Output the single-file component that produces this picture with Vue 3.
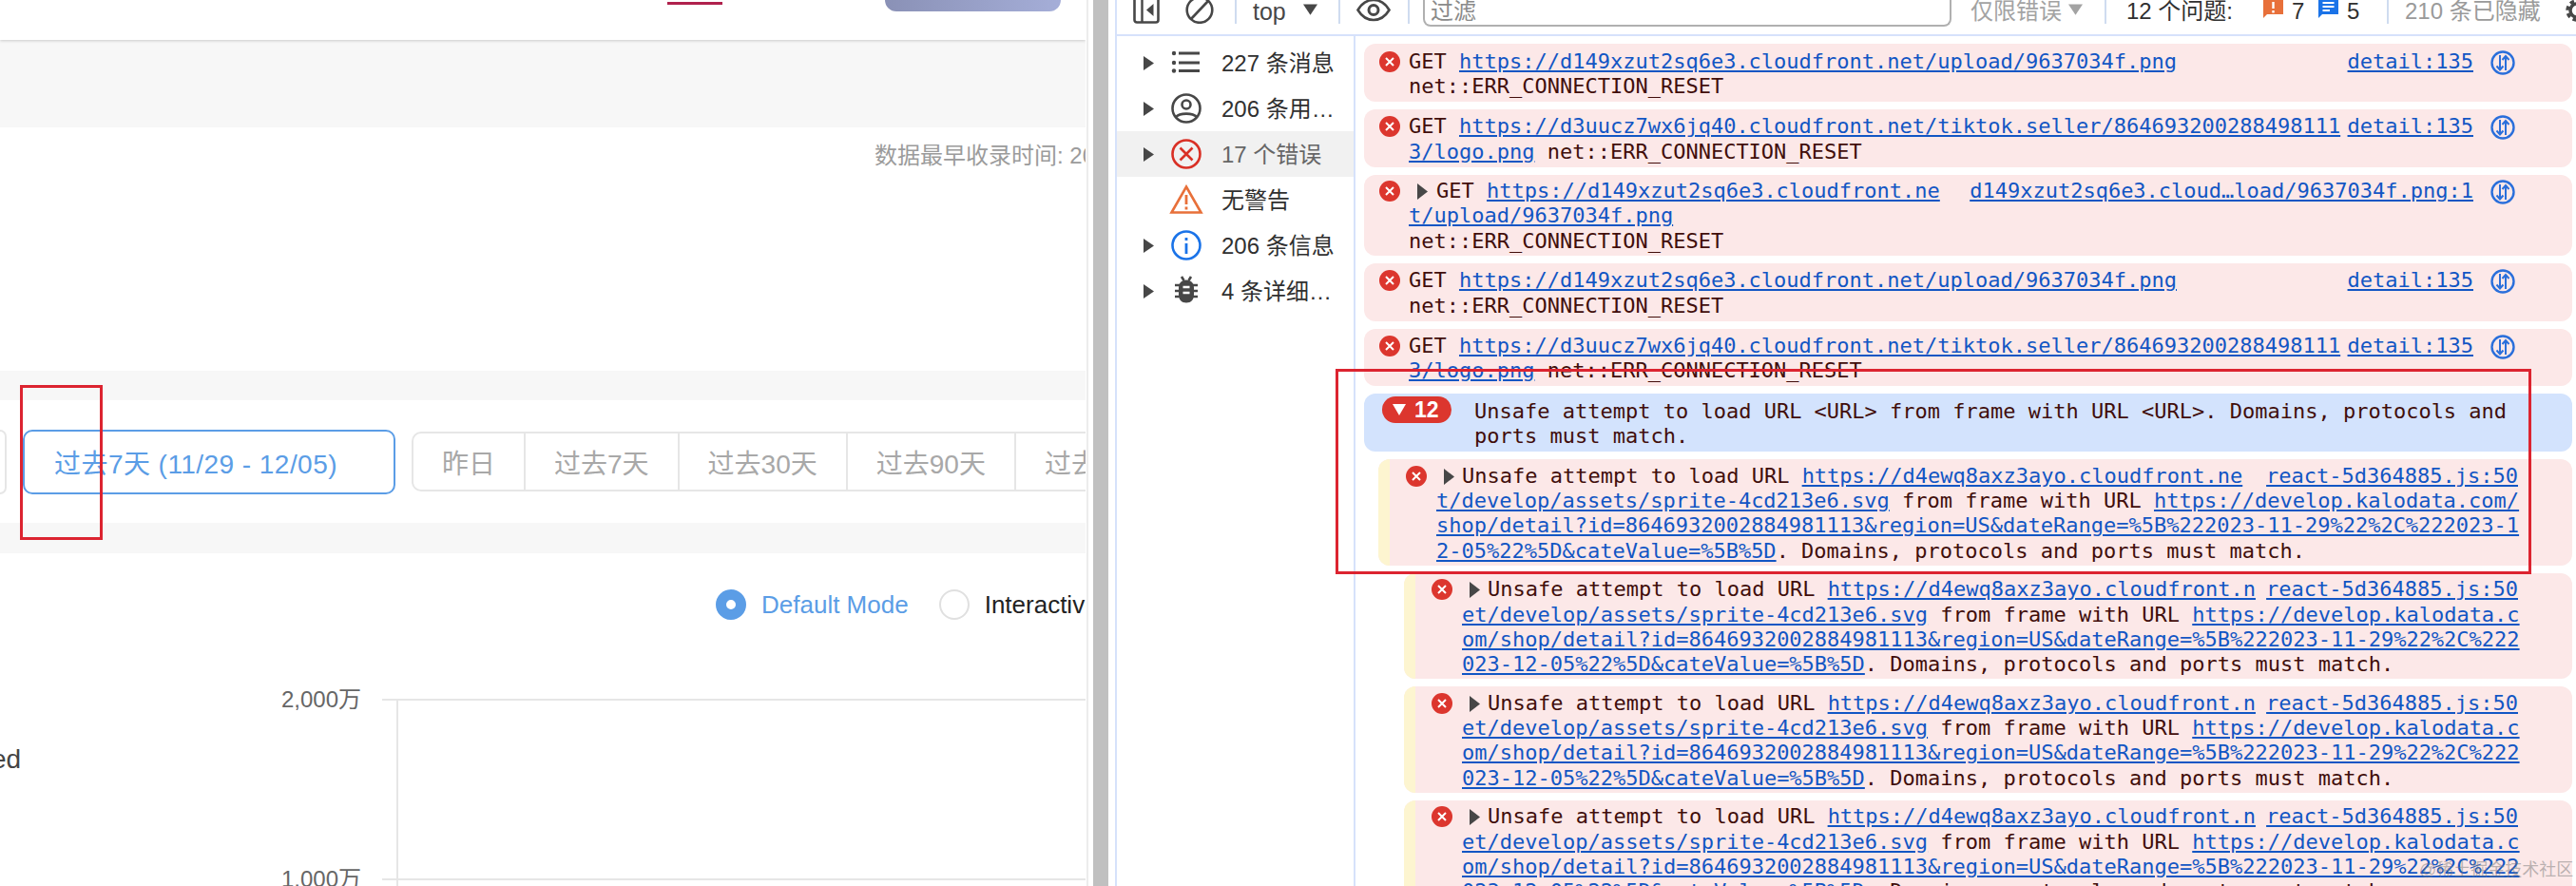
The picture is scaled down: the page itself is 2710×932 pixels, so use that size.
<script setup>
const sideRows = [
  { key: 'all', text: '227 条消息', arrow: true },
  { key: 'user', text: '206 条用户消息', arrow: true },
  { key: 'err', text: '17 个错误', arrow: true, active: true },
  { key: 'warn', text: '无警告', arrow: false },
  { key: 'info', text: '206 条信息', arrow: true },
  { key: 'bug', text: '4 条详细信息', arrow: true },
]
const tabs = ['昨日', '过去7天', '过去30天', '过去90天', '过去180天']
const nestedFirst = {
  level: 'one',
  head: 'https://d4ewq8axz3ayo.cloudfront.ne',
  l2a: 't/develop/assets/sprite-4cd213e6.svg',
  l2b: 'https://develop.kalodata.com/',
  l3: 'shop/detail?id=8646932002884981113&region=US&dateRange=%5B%222023-11-29%22%2C%222023-1',
  l4: '2-05%22%5D&cateValue=%5B%5D',
}
const nestedOther = {
  level: 'two',
  head: 'https://d4ewq8axz3ayo.cloudfront.n',
  l2a: 'et/develop/assets/sprite-4cd213e6.svg',
  l2b: 'https://develop.kalodata.c',
  l3: 'om/shop/detail?id=8646932002884981113&region=US&dateRange=%5B%222023-11-29%22%2C%222',
  l4: '023-12-05%22%5D&cateValue=%5B%5D',
}
const nested = [nestedFirst, nestedOther, nestedOther, nestedOther]
</script>

<template>
  <div class="root">
    <section class="page">
      <header class="head">
        <span class="tab-mark"></span>
        <span class="cta"></span>
      </header>
      <div class="band band-tall"></div>
      <div class="note-section">
        <span class="note">数据最早收录时间: 2023</span>
      </div>
      <div class="band band-short"></div>
      <div class="filters">
        <span class="ghost"></span>
        <span class="picked">过去7天 (11/29 - 12/05)</span>
        <div class="tabs">
          <span v-for="t in tabs" :key="t" class="tabitem">{{ t }}</span>
        </div>
      </div>
      <div class="band band-short2"></div>
      <div class="chart">
        <div class="modes">
          <span class="radio on"></span>
          <span class="mode on-text">Default Mode</span>
          <span class="radio off"></span>
          <span class="mode off-text">Interactive Mode</span>
        </div>
        <div class="tick first"><span class="tick-label">2,000万</span><span class="tick-line"></span></div>
        <div class="legend-row"><span class="legend">ed</span></div>
        <div class="tick"><span class="tick-label">1,000万</span><span class="tick-line"></span></div>
        <span class="y-axis"></span>
      </div>
    </section>

    <div class="sash"><span class="sash-line"></span><span class="sash-bar"></span></div>

    <section class="tools">
      <div class="toolbar">
        <svg class="i-panel" viewBox="0 0 28 25"><rect x="1.5" y="-5" width="25" height="28.5" rx="2.5" fill="none" stroke="#474747" stroke-width="2.6"/><path d="M9.5 0V23" stroke="#474747" stroke-width="2.4"/><path d="M21.5 4V17L14 10.5Z" fill="#474747"/></svg>
        <svg class="i-clear" viewBox="0 0 30 25"><circle cx="15" cy="10.5" r="13.3" fill="none" stroke="#474747" stroke-width="2.6"/><path d="M6 20L24 1" stroke="#474747" stroke-width="2.6"/></svg>
        <span class="sep s1"></span>
        <span class="t-top">top</span>
        <svg class="i-tri t1" viewBox="0 0 16 12"><path d="M0 0H16L8 12Z" fill="#474747"/></svg>
        <span class="sep s2"></span>
        <svg class="i-eye" viewBox="0 0 36 24"><path d="M1.5 10.5C6 3 12 0 18 0S30 3 34.500 10.500C30 18 24 21 18 21S6 18 1.500 10.500Z" fill="none" stroke="#474747" stroke-width="2.600"/><circle cx="18" cy="10.500" r="5" fill="none" stroke="#474747" stroke-width="3"/></svg>
        <span class="sep s3"></span>
        <div class="filter"><span>过滤</span></div>
        <span class="t-level">仅限错误</span>
        <svg class="i-tri t2" viewBox="0 0 16 12"><path d="M0 0H16L8 12Z" fill="#a3a3a3"/></svg>
        <span class="sep s4"></span>
        <span class="t-issues">12 个问题:</span>
        <svg class="i-flag f1" viewBox="0 0 21 19"><path d="M0 0H21V15H4L0 19Z" fill="#e8703a"/><path d="M10.500 2V9M10.500 11V13.500" stroke="#fff" stroke-width="2.400"/></svg>
        <span class="t-n n1">7</span>
        <svg class="i-flag f2" viewBox="0 0 21 19"><path d="M0 0H21V15H4L0 19Z" fill="#1a73e8"/><path d="M4.500 3H16.500M4.500 7H16.500M4.500 11H12" stroke="#fff" stroke-width="1.800"/></svg>
        <span class="t-n n2">5</span>
        <span class="sep s5"></span>
        <span class="t-hidden">210 条已隐藏</span>
        <svg class="i-gear" viewBox="0 0 17 24"><circle cx="15" cy="11" r="7" fill="none" stroke="#474747" stroke-width="3.500"/><circle cx="15" cy="11" r="10" fill="none" stroke="#474747" stroke-width="3.500" stroke-dasharray="4.500 3.350"/></svg>
      </div>

      <div class="console">
        <aside class="side">
          <div v-for="r in sideRows" :key="r.key" class="side-row" :class="{ active: r.active }">
            <svg class="arrow" :class="{ hide: !r.arrow }" viewBox="0 0 11 15"><path d="M0 0L11 7.500L0 15Z" fill="#474747"/></svg>
            <svg class="side-icon" viewBox="0 0 36 32">
              <g v-if="r.key === 'all'" fill="#474747">
                <circle cx="5" cy="6" r="2.200"/><circle cx="5" cy="16" r="2.200"/><circle cx="5" cy="24.500" r="2.200"/>
                <rect x="10" y="4.500" width="22" height="3"/><rect x="10" y="14.500" width="22" height="3"/><rect x="10" y="23" width="22" height="3"/>
              </g>
              <g v-else-if="r.key === 'user'" fill="none" stroke="#474747" stroke-width="2.600">
                <circle cx="18" cy="16" r="14.500"/><circle cx="18" cy="12" r="4.500"/><path d="M7 25C11 20.500 25 20.500 29 25"/>
              </g>
              <g v-else-if="r.key === 'err'" fill="none" stroke="#d93025" stroke-width="2.600">
                <circle cx="18" cy="16" r="14.500"/><path d="M11.500 9.500L24.500 22.500M24.500 9.500L11.500 22.500"/>
              </g>
              <g v-else-if="r.key === 'warn'">
                <path d="M18 2.500L33.500 29.500H2.500Z" fill="none" stroke="#e8703a" stroke-width="2.600"/>
                <path d="M18 11V21M18 23.500V26.500" stroke="#e8703a" stroke-width="2.800"/>
              </g>
              <g v-else-if="r.key === 'info'">
                <circle cx="18" cy="16" r="14.500" fill="none" stroke="#1a73e8" stroke-width="2.600"/>
                <path d="M18 14V25M18 8V11" stroke="#1a73e8" stroke-width="2.800"/>
              </g>
              <g v-else>
                <path d="M13 1L15.500 5M23 1L20.500 5M6 10H11M6 16H11M6 22H11M25 10H30M25 16H30M25 22H30" stroke="#474747" stroke-width="2.600" fill="none"/>
                <path d="M18 4.500C23.500 4.500 26 8.500 26 13V20C26 25 23 28.500 18 28.500S10 25 10 20V13C10 8.500 12.500 4.500 18 4.500Z" fill="#474747"/>
                <path d="M14.500 12H21.500M14.500 18H21.500" stroke="#fff" stroke-width="2.400"/>
              </g>
            </svg>
            <span class="side-text">{{ r.text }}</span>
          </div>
        </aside>

        <div class="log">
          <div class="row plain">
            <span class="gutter"><svg class="x" viewBox="0 0 22 22"><circle cx="11" cy="11" r="11" fill="#dc362e"/><path d="M7 7L15 15M15 7L7 15" stroke="#fff" stroke-width="2"/></svg></span>
            <div class="body">
              <div class="line split"><span>GET <a>https://d149xzut2sq6e3.cloudfront.net/upload/9637034f.png</a></span><span class="src"><a>detail:135</a><svg class="map" viewBox="0 0 26 26"><circle cx="13" cy="13" r="11.500" fill="none" stroke="#2a6fdb" stroke-width="2.400"/><path d="M10 5V20M6.500 16.500L10 20.500L13.500 16.500M16 21V6.500M12.500 10L16 6L19.500 10" fill="none" stroke="#2a6fdb" stroke-width="2"/></svg></span></div>
              <div class="line">net::ERR_CONNECTION_RESET</div>
            </div>
          </div>
          <div class="row plain">
            <span class="gutter"><svg class="x" viewBox="0 0 22 22"><circle cx="11" cy="11" r="11" fill="#dc362e"/><path d="M7 7L15 15M15 7L7 15" stroke="#fff" stroke-width="2"/></svg></span>
            <div class="body">
              <div class="line split"><span>GET <a>https://d3uucz7wx6jq40.cloudfront.net/tiktok.seller/864693200288498111</a></span><span class="src"><a>detail:135</a><svg class="map" viewBox="0 0 26 26"><circle cx="13" cy="13" r="11.500" fill="none" stroke="#2a6fdb" stroke-width="2.400"/><path d="M10 5V20M6.500 16.500L10 20.500L13.500 16.500M16 21V6.500M12.500 10L16 6L19.500 10" fill="none" stroke="#2a6fdb" stroke-width="2"/></svg></span></div>
              <div class="line"><a>3/logo.png</a> net::ERR_CONNECTION_RESET</div>
            </div>
          </div>
          <div class="row tight">
            <span class="gutter"><svg class="x" viewBox="0 0 22 22"><circle cx="11" cy="11" r="11" fill="#dc362e"/><path d="M7 7L15 15M15 7L7 15" stroke="#fff" stroke-width="2"/></svg></span>
            <div class="body">
              <div class="line split"><span class="lead get"><svg class="caret" viewBox="0 0 11 17"><path d="M0 0L11 8.500L0 17Z" fill="#474747"/></svg>GET <a>https://d149xzut2sq6e3.cloudfront.ne</a></span><span class="src"><a>d149xzut2sq6e3.cloud…load/9637034f.png:1</a><svg class="map" viewBox="0 0 26 26"><circle cx="13" cy="13" r="11.500" fill="none" stroke="#2a6fdb" stroke-width="2.400"/><path d="M10 5V20M6.500 16.500L10 20.500L13.500 16.500M16 21V6.500M12.500 10L16 6L19.500 10" fill="none" stroke="#2a6fdb" stroke-width="2"/></svg></span></div>
              <div class="line"><a>t/upload/9637034f.png</a></div>
              <div class="line">net::ERR_CONNECTION_RESET</div>
            </div>
          </div>
          <div class="row plain">
            <span class="gutter"><svg class="x" viewBox="0 0 22 22"><circle cx="11" cy="11" r="11" fill="#dc362e"/><path d="M7 7L15 15M15 7L7 15" stroke="#fff" stroke-width="2"/></svg></span>
            <div class="body">
              <div class="line split"><span>GET <a>https://d149xzut2sq6e3.cloudfront.net/upload/9637034f.png</a></span><span class="src"><a>detail:135</a><svg class="map" viewBox="0 0 26 26"><circle cx="13" cy="13" r="11.500" fill="none" stroke="#2a6fdb" stroke-width="2.400"/><path d="M10 5V20M6.500 16.500L10 20.500L13.500 16.500M16 21V6.500M12.500 10L16 6L19.500 10" fill="none" stroke="#2a6fdb" stroke-width="2"/></svg></span></div>
              <div class="line">net::ERR_CONNECTION_RESET</div>
            </div>
          </div>
          <div class="row plain">
            <span class="gutter"><svg class="x" viewBox="0 0 22 22"><circle cx="11" cy="11" r="11" fill="#dc362e"/><path d="M7 7L15 15M15 7L7 15" stroke="#fff" stroke-width="2"/></svg></span>
            <div class="body">
              <div class="line split"><span>GET <a>https://d3uucz7wx6jq40.cloudfront.net/tiktok.seller/864693200288498111</a></span><span class="src"><a>detail:135</a><svg class="map" viewBox="0 0 26 26"><circle cx="13" cy="13" r="11.500" fill="none" stroke="#2a6fdb" stroke-width="2.400"/><path d="M10 5V20M6.500 16.500L10 20.500L13.500 16.500M16 21V6.500M12.500 10L16 6L19.500 10" fill="none" stroke="#2a6fdb" stroke-width="2"/></svg></span></div>
              <div class="line"><a>3/logo.png</a> net::ERR_CONNECTION_RESET</div>
            </div>
          </div>
          <div class="row group">
            <span class="badge"><svg class="badge-tri" viewBox="0 0 14 12"><path d="M0 0H14L7 12Z" fill="#fff"/></svg>12</span>
            <div class="body">
              <div class="line">Unsafe attempt to load URL &lt;URL&gt; from frame with URL &lt;URL&gt;. Domains, protocols and</div>
              <div class="line">ports must match.</div>
            </div>
          </div>
          <div v-for="(n, i) in nested" :key="i" class="row tight nested" :class="n.level">
            <span class="strip"></span>
            <span class="gutter"><svg class="x" viewBox="0 0 22 22"><circle cx="11" cy="11" r="11" fill="#dc362e"/><path d="M7 7L15 15M15 7L7 15" stroke="#fff" stroke-width="2"/></svg></span>
            <div class="body">
              <div class="line split"><span class="lead unsafe"><svg class="caret" viewBox="0 0 11 17"><path d="M0 0L11 8.500L0 17Z" fill="#474747"/></svg>Unsafe attempt to load URL <a>{{ n.head }}</a></span><span class="src"><a>react-5d364885.js:50</a></span></div>
              <div class="line"><a>{{ n.l2a }}</a> from frame with URL <a>{{ n.l2b }}</a></div>
              <div class="line"><a>{{ n.l3 }}</a></div>
              <div class="line"><a>{{ n.l4 }}</a>. Domains, protocols and ports must match.</div>
            </div>
          </div>
        </div>
      </div>
    </section>

    <span class="mark mark-date"></span>
    <span class="mark mark-msg"></span>
    <span class="watermark">@稀土掘金技术社区</span>
  </div>
</template>

<style>
html, body { margin: 0; overflow: hidden; background: #fff; }
</style>

<style scoped>
.root {
  position: relative;
  display: flex;
  width: 2710px;
  height: 932px;
  overflow: hidden;
  background: #fff;
  font-family: "Liberation Sans", "Noto Sans CJK SC", sans-serif;
}
.page {
  position: relative;
  width: 1142px;
  height: 932px;
  flex: none;
  overflow: hidden;
}
.head {
  position: relative;
  z-index: 1;
  display: flex;
  align-items: flex-start;
  height: 42px;
  background: #fff;
  box-shadow: 0 1px 3px rgba(0, 0, 0, .18);
}
.tab-mark { width: 58px; height: 3px; margin: 2px 0 0 702px; background: #b0224d; }
.cta {
  width: 185px;
  height: 12px;
  margin-left: 171px;
  border-radius: 0 0 14px 14px;
  background: linear-gradient(90deg, #8a91b6, #a5aed8);
}
.band { background: #f7f7f7; }
.band-tall { height: 92px; }
.band-short { height: 31px; }
.band-short2 { height: 32px; }
.note-section { height: 256px; box-sizing: border-box; padding: 16px 0 0 920px; white-space: nowrap; }
.note { font-size: 24px; line-height: 28px; color: #9b9b9b; }
.filters { display: flex; align-items: center; height: 129px; }
.ghost {
  width: 7px;
  height: 68px;
  flex: none;
  box-sizing: border-box;
  border: 2px solid #e6e6e6;
  border-left: 0;
  border-radius: 0 10px 10px 0;
}
.picked {
  display: flex;
  align-items: center;
  width: 392px;
  height: 68px;
  flex: none;
  margin-left: 17px;
  box-sizing: border-box;
  padding-left: 31px;
  border: 2px solid #5b9de6;
  border-radius: 10px;
  font-size: 28px;
  letter-spacing: .45px;
  color: #5b9de6;
  white-space: nowrap;
}
.tabs {
  display: flex;
  height: 63px;
  flex: none;
  margin-left: 17px;
  box-sizing: border-box;
  border: 2px solid #e6e6e6;
  border-radius: 10px;
}
.tabitem {
  display: flex;
  align-items: center;
  padding: 0 30px;
  border-right: 2px solid #e6e6e6;
  font-size: 28px;
  color: #a8a8a8;
  white-space: nowrap;
}
.chart { position: relative; height: 350px; white-space: nowrap; }
.modes { display: flex; align-items: center; height: 32px; padding: 38px 0 0 753px; }
.radio { width: 32px; height: 32px; flex: none; box-sizing: border-box; border-radius: 50%; }
.radio.on { border: 11px solid #5b9de6; background: #fff; }
.radio.off { margin-left: 32px; border: 2px solid #e0e0e0; }
.mode { margin-left: 16px; font-size: 26px; }
.on-text { color: #5b9de6; }
.off-text { color: #222; }
.tick { display: flex; align-items: center; height: 28px; }
.tick.first { margin-top: 70px; }
.tick-label { width: 380px; flex: none; text-align: right; font-size: 24px; line-height: 28px; color: #666; }
.tick-line { flex: 1; height: 2px; margin-left: 22px; background: #e6e6e6; }
.legend-row { height: 161px; }
.legend { display: block; margin-left: -9px; padding-top: 34px; font-size: 28px; line-height: 30px; color: #444; }
.y-axis { position: absolute; left: 417px; top: 154px; bottom: 0; width: 2px; background: #e6e6e6; }

.sash { display: flex; width: 31px; height: 932px; flex: none; }
.sash-line { width: 2px; margin-left: 1px; background: #ececec; }
.sash-bar { width: 16px; margin-left: 5px; background: #c0c0c0; }

.tools {
  width: 1537px;
  flex: none;
  box-sizing: border-box;
  border-left: 2px solid #d6e2fb;
  display: flex;
  flex-direction: column;
  height: 932px;
  overflow: hidden;
}
.toolbar {
  display: flex;
  align-items: flex-start;
  height: 36px;
  flex: none;
  box-sizing: content-box;
  border-bottom: 2px solid #d6e2fb;
  font-size: 24px;
  line-height: 24px;
  white-space: nowrap;
  overflow: hidden;
}
.toolbar > * { flex: none; }
.i-panel { width: 28px; height: 25px; margin-left: 17px; }
.i-clear { width: 30px; height: 25px; margin-left: 27px; }
.sep { width: 2px; height: 25px; background: #cfdcf0; }
.s1 { margin-left: 22px; }
.s2 { margin-left: 22px; }
.s3 { margin-left: 18px; }
.s4 { margin-left: 23px; }
.s5 { margin-left: 29px; }
.t-top { width: 35px; margin-left: 17px; color: #474747; font-size: 25px; }
.i-tri { width: 15px; height: 12px; margin-top: 4px; }
.t1 { margin-left: 18px; }
.t2 { margin-left: 7px; }
.i-eye { width: 36px; height: 24px; margin-left: 17px; }
.filter {
  width: 556px;
  height: 28px;
  margin-left: 14px;
  box-sizing: border-box;
  padding-left: 6px;
  border: 2px solid #b0b0b0;
  border-top: 0;
  border-radius: 0 0 8px 8px;
  color: #8a8a8a;
}
.t-level { width: 96px; margin-left: 20px; color: #a3a3a3; }
.t-issues { width: 113px; margin-left: 21px; color: #303030; }
.i-flag { width: 21px; height: 19px; }
.f1 { margin-left: 31px; }
.f2 { margin-left: 15px; }
.t-n { width: 13px; color: #303030; }
.n1 { margin-left: 9px; }
.n2 { margin-left: 9px; }
.t-hidden { width: 143px; margin-left: 17px; color: #9a9a9a; }
.i-gear { width: 17px; height: 24px; margin-left: 23px; }

.console { display: flex; flex: 1; min-height: 0; }
.side {
  width: 249px;
  flex: none;
  box-sizing: content-box;
  padding-top: 4px;
  border-right: 2px solid #d6e2fb;
}
.side-row { display: flex; align-items: center; height: 48px; padding-left: 28px; box-sizing: border-box; }
.side-row.active { background: #f1f1f1; color: #666; }
.arrow { width: 11px; height: 15px; flex: none; }
.arrow.hide { visibility: hidden; }
.side-icon { width: 36px; height: 32px; flex: none; margin-left: 16px; }
.side-text {
  width: 120px;
  margin: -3px 0 0 19px;
  overflow: hidden;
  white-space: nowrap;
  text-overflow: ellipsis;
  font-size: 24px;
  color: #303030;
}
.active .side-text { color: #666; }

.log {
  display: flex;
  flex-direction: column;
  gap: 8px;
  flex: 1;
  min-width: 0;
  padding: 8px 4px 0 9px;
  font-family: "DejaVu Sans Mono", monospace;
  font-size: 22px;
  color: #410e0b;
}
.row { display: flex; flex: none; border-radius: 12px; background: #fce8e8; overflow: hidden; }
.plain { padding: 5.5px 0 2.5px; }
.tight { padding: 4.5px 0 1.5px; }
.gutter { width: 47px; flex: none; padding: 2px 0 0 16px; box-sizing: border-box; }
.x { display: block; width: 22px; height: 22px; }
.body { flex: 1; min-width: 0; }
.line { height: 26.4px; line-height: 26.4px; white-space: pre; }
.split { display: flex; justify-content: space-between; }
a { color: #1256c4; text-decoration: underline; }
.src { display: flex; flex: none; padding-right: 60px; }
.map { width: 26px; height: 26px; margin: 1px 0 0 18px; flex: none; }
.lead { display: block; }
.caret { width: 11px; height: 17px; vertical-align: -2px; }
.get { padding-left: 9px; }
.get .caret { margin-right: 9px; }
.unsafe { padding-left: 8px; }
.unsafe .caret { margin-right: 8px; }

.group { padding: 5.5px 0 2.5px; background: #d3e3fd; align-items: flex-start; }
.badge {
  display: flex;
  align-items: center;
  width: 73px;
  height: 28px;
  flex: none;
  margin: -2.500px 24px 0 19px;
  box-sizing: border-box;
  padding-left: 11px;
  border-radius: 14px;
  background: #dc362e;
  color: #fff;
  font-family: "Liberation Sans", sans-serif;
  font-size: 23px;
  font-weight: 700;
}
.badge-tri { width: 14px; height: 12px; margin-right: 9px; }

.nested .src { padding-right: 57px; }
.strip { width: 12px; flex: none; margin: -4.500px 0 -1.500px; background: #fdf5d0; }
.nested .gutter { width: 49px; padding-left: 17px; }
.nested.one { margin-left: 15px; }
.nested.two { margin-left: 42px; }

.mark { position: absolute; box-sizing: border-box; border: 3px solid #dc2430; pointer-events: none; }
.mark-date { left: 21px; top: 405px; width: 87px; height: 163px; }
.mark-msg { left: 1405px; top: 388px; width: 1258px; height: 216px; }
.watermark {
  position: absolute;
  left: 2545px;
  top: 903px;
  font-size: 18px;
  line-height: 24px;
  color: rgba(120, 120, 120, .5);
  white-space: nowrap;
}
</style>
